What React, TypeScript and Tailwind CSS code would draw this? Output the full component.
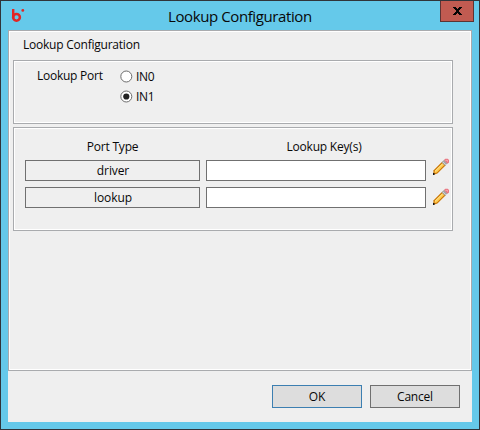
import React from "react";

function Label({ children, width, className = "" }: { children: string; width: string; className?: string }) {
  return <span className={`block whitespace-nowrap ${width} ${className}`}>{children}</span>;
}

function Pencil() {
  return (
    <svg width="18" height="18" viewBox="0 0 18 18" className="shrink-0">
      <path d="M1.6 12.2 10.4 3.4 14 7 5.4 15.6 1 17z" fill="#cb7606" />
      <path d="M2.8 12.8 10.4 5.2l1.9 1.9-7.4 7.4-2.4.6z" fill="#ffcb50" />
      <path d="M3 13.3l7.7-7.5" stroke="#ffe99a" strokeWidth="0.9" />
      <path d="M9.6 4.2 12.2 1.8 15.6 5.2l-2.6 2.5z" fill="#a3a5a8" />
      <path d="M10.8 3.8l3 3" stroke="#d2d3d5" strokeWidth="1" />
      <path d="M12 2 13.3 .7h2.4L17 2v2.4L15.4 5.8z" fill="#e8737f" />
      <path d="M13.4 2.3h2.2v1.4" stroke="#f6aeb4" fill="none" />
      <path d="M1 15h1.5v2H1z" fill="#171717" />
    </svg>
  );
}

function Radio({ label, checked = false }: { label: string; checked?: boolean }) {
  return (
    <div className="flex h-[20px] items-center gap-[3px]">
      <svg width="13" height="13" viewBox="0 0 13 13">
        <circle cx="6.3" cy="6.5" r="5.5" fill="#fff" stroke="#6c6c6c" />
        {checked && <circle cx="6.3" cy="6.5" r="3.1" fill="#222" />}
      </svg>
      <Label width="w-[20px]" className="pt-px tracking-[-0.3px]">{label}</Label>
    </div>
  );
}

function PortRow({ name }: { name: string }) {
  return (
    <div className="flex h-[21px]">
      <div className="flex h-[21px] w-[175px] items-center justify-center border border-[#707070] pl-px pt-px tracking-[-0.1px]">{name}</div>
      <input className="ml-[6px] h-[21px] w-[220px] border border-[#707070] bg-white outline-none" />
    </div>
  );
}

const group = "w-[440px] border border-[#a9abae] shadow-[inset_0_0_0_1px_#fff]";

export default function App() {
  return (
    <div className="flex h-[430px] w-[480px] flex-col border border-[#30343a] bg-[#65c9ea] px-[7px] pb-[7px] font-['Open_Sans','Noto_Sans',sans-serif] text-[12px] leading-[16px] text-[#080808]">
      <header className="flex h-[29px] shrink-0">
        <svg width="20" height="20" viewBox="0 0 20 20" className="ml-[3px] mt-[6px]">
          <path d="M2.2 2v9" stroke="#e22624" strokeWidth="2.4" />
          <circle cx="5.5" cy="10.3" r="3.4" fill="none" stroke="#e22624" strokeWidth="2.5" />
          <circle cx="11.8" cy="3.4" r="1.4" fill="#e22624" />
        </svg>
        <Label width="w-[146px]" className="ml-[137px] mt-[5px] text-[15px] leading-[20px] tracking-[-0.4px]">Lookup Configuration</Label>
        <button className="-mr-[2px] ml-auto flex h-[21px] w-[34px] items-center justify-center border border-t-0 border-[#5c3434] bg-[#c15b51]">
          <svg width="9" height="8" viewBox="0 0 9 8" shapeRendering="crispEdges">
            <path d="M0 0h3v1h1v1h1v-1h1v-1h3v1h-1v1h-1v1h-1v2h1v1h1v1h1v1h-3v-1h-1v-1h-1v1h-1v1h-3v-1h1v-1h1v-1h1v-2h-1v-1h-1v-1h-1z" fill="#050505" />
          </svg>
        </button>
      </header>
      <main className="flex h-[392px] flex-col bg-[#efefef]">
        <section className="h-[341px] shrink-0 border border-[#a9abae] pl-[4px] shadow-[inset_0_0_0_1px_#fff]">
          <Label width="w-[120px]" className="ml-[10px] mt-[6px] tracking-[-0.23px]">Lookup Configuration</Label>
          <div className={`mt-[7px] flex h-[64px] ${group}`}>
            <Label width="w-[66px]" className="ml-[23px] mt-[7px] tracking-[-0.25px]">Lookup Port</Label>
            <div className="ml-[17px] mt-[5px]">
              <Radio label="IN0" />
              <Radio label="IN1" checked />
            </div>
          </div>
          <div className={`mt-[3px] flex h-[104px] ${group}`}>
            <div className="ml-[11px] mt-[11px]">
              <div className="flex h-[21px] tracking-[-0.2px]">
                <span className="w-[175px] text-center">Port Type</span>
                <span className="ml-[6px] w-[236px] text-center">Lookup Key(s)</span>
              </div>
              <div className="flex gap-[6px]">
                <div className="flex flex-col gap-[6px]">
                  <PortRow name="driver" />
                  <PortRow name="lookup" />
                </div>
                <div className="-mt-[2px] flex flex-col gap-[12px]">
                  <Pencil />
                  <Pencil />
                </div>
              </div>
            </div>
          </div>
        </section>
        <footer className="flex justify-end gap-[8px] pr-[12px] pt-[14px]">
          <button className="h-[23px] w-[90px] border border-[#3c7fb1] bg-[#ddd] pt-px tracking-[-0.2px]">OK</button>
          <button className="h-[23px] w-[90px] border border-[#707070] bg-[#ddd] pt-px tracking-[-0.2px]">Cancel</button>
        </footer>
      </main>
    </div>
  );
}
